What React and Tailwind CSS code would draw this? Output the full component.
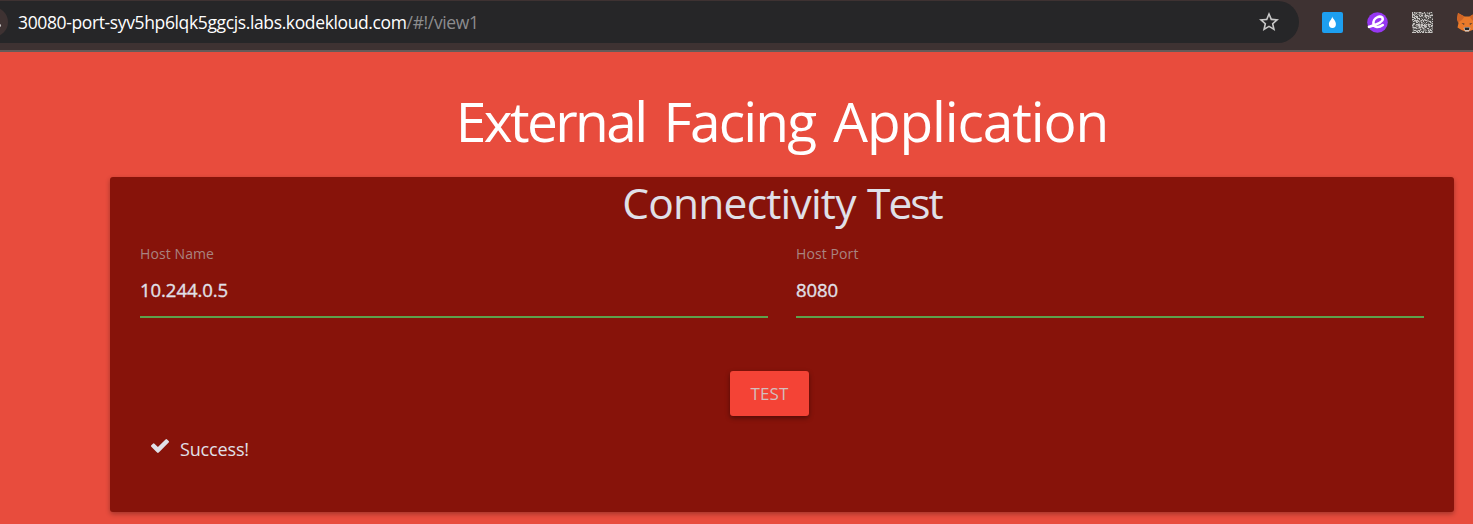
import { MdStarBorder } from "react-icons/md";

function CheckIcon() {
  return (
    <svg className="mt-[2px] h-[14px] w-[18px] shrink-0" viewBox="121 334 1550 1188" fill="#e0e0e8">
      <path d="M1671 566q0 40-28 68l-724 724-136 136q-28 28-68 28t-68-28l-136-136-362-362q-28-28-28-68t28-68l136-136q28-28 68-28t68 28l294 295 656-657q28-28 68-28t68 28l136 136q28 28 28 68z" />
    </svg>
  );
}

function DropIcon() {
  return (
    <svg className="size-[21px] shrink-0" viewBox="0 0 21 21">
      <rect width="21" height="21" rx="2" fill="#1d9ff0" />
      <path d="M10.200 4.600c.5 2.500 3.700 4 3.700 7.400a3.500 4 0 0 1-7 0c0-2.500 2.800-4 3.300-7.400z" fill="#fff" />
    </svg>
  );
}

function OrbitIcon() {
  return (
    <svg className="size-[21px] shrink-0" viewBox="0 0 21 21">
      <circle cx="10.500" cy="10.500" r="10.300" fill="#9637f2" />
      <path d="M2 14.800C7 13.300 15.800 11 15.800 7.300c0-2.600-3-3.200-5.300-2.200-3 1.200-4.500 4.300-4 7 .6 3.500 5.200 4 9.300.9" fill="none" stroke="#fff" strokeWidth="2.600" strokeLinecap="round" />
    </svg>
  );
}

const cells = [];
for (let y = 0; y < 21; y++) {
  for (let x = 0; x < 21; x++) {
    const n = Math.sin(x * 12.9898 + y * 78.233) * 43758.5453;
    cells.push([x, y, n - Math.floor(n)]);
  }
}

function CodeIcon() {
  return (
    <svg className="size-[21px] shrink-0" viewBox="0 0 21 21">
      <rect width="21" height="21" fill="#aaa6a4" />
      {cells.map(([x, y, n]) => (
        <rect key={`${x}-${y}`} x={x} y={y} width="1" height="1" fill={n > 0.66 ? "#4b4846" : n > 0.33 ? "#85817f" : "#c6c3c1"} />
      ))}
    </svg>
  );
}

function FoxIcon() {
  return (
    <svg className="mt-px h-[19px] w-[20px] shrink-0" viewBox="0 0 20 19">
      <path d="M1 0l6.500 3.500h5L19 0l1 6-1.500 4 1 4.500-4 2.500-4 1.500h-3l-4-1.500-4-2.500 1-4.500L0 6z" fill="#e87a2a" />
      <path d="M1 0l6.500 3.500L5 7 1 9.500 0 6zM19 0l-6.500 3.500L15 7l4 2.500L20 6z" fill="#cf6526" />
      <path d="M4.500 10l3 .5-.5 1.500zM15.500 10l-3 .5.500 1.500z" fill="#4a3a30" />
      <path d="M6.500 15l1.500-1h4l1.500 1-1.500 3.500H8z" fill="#cfc5bd" />
      <path d="M7.500 14.500h5l-.5 2.500H8z" fill="#202428" />
    </svg>
  );
}

function Toolbar() {
  return (
    <header className="flex h-[52px] items-start border-b-2 border-[#655b59] bg-[#3e3232]">
      <div className="mt-px flex h-[42px] w-[1299px] shrink-0 items-center overflow-hidden rounded-r-full bg-[#262628]">
        <div className="-ml-[24px] mr-[10px] flex h-[30px] w-[32px] shrink-0 items-center justify-end rounded-full bg-[#3e3232]">
          <span className="mr-[7px] mt-[6px] size-[3px] rounded-full bg-[#c9c5c4]" />
        </div>
        <p className="grow whitespace-nowrap text-[17.500px] leading-[24px] tracking-[-0.370px] text-white">
          <span>30080-port-syv5hp6lqk5ggcjs.labs.kodekloud.com</span>
          <span className="text-[#8c8c8e]">/#!/view1</span>
        </p>
        <MdStarBorder className="mr-[18px] size-[24px] text-[#c7c7c7]" />
      </div>
      <div className="ml-[23px] mt-[12px] flex gap-[24px]">
        <DropIcon />
        <OrbitIcon />
        <CodeIcon />
        <FoxIcon />
      </div>
    </header>
  );
}

function Field({ label, value }) {
  return (
    <div className="flex h-[74px] w-[628px] flex-col border-b-2 border-[#5da24b]">
      <label className="text-[14px] leading-[20px] tracking-[0.100px] text-[#a98380]">{label}</label>
      <span className="mt-[14px] text-[18.500px] leading-[24px] tracking-[-0.050px] text-[#e0e0e8] [-webkit-text-stroke:0.350px_#e0e0e8]">{value}</span>
    </div>
  );
}

export default function App() {
  return (
    <div className="h-[524px] w-[1473px] overflow-hidden bg-[#e84c3d] font-['Open_Sans',sans-serif]">
      <Toolbar />
      <main className="ml-[110px] w-[1344px]">
        <h1 className="h-[125px] whitespace-nowrap pt-[29px] text-center text-[55px] leading-[80px] tracking-[-1.400px] text-white [word-spacing:5px]">
          <span className="tracking-[-2.600px]">External</span>{" "}
          <span className="tracking-[-1.800px]">Facing</span>{" "}
          <span className="tracking-[-1.100px]">Application</span>
        </h1>
        <section className="h-[335px] rounded-[3px] bg-[#87130a] px-[30px] shadow-[0_2px_5px_rgba(0,0,0,0.3)]">
          <h2 className="h-[67px] whitespace-nowrap text-center text-[42.500px] leading-[51px] tracking-[-0.800px] text-[#e0e0e8] [word-spacing:1px]">
            <span>Connectivity</span> <span className="tracking-[-2px]">Test</span>
          </h2>
          <div className="flex gap-[28px]">
            <Field label="Host Name" value="10.244.0.5" />
            <Field label="Host Port" value="8080" />
          </div>
          <button className="ml-[590px] mt-[53px] flex h-[45px] w-[79px] items-center justify-center rounded-[3px] bg-[#f44336] pt-px text-[17px] tracking-[0.100px] text-[#d3bebd] shadow-[0_2px_5px_rgba(0,0,0,0.4)]">
            <span>TEST</span>
          </button>
          <div className="ml-[11px] mt-[21px] flex items-start">
            <CheckIcon />
            <span className="ml-[11px] text-[18px] leading-[24px] tracking-[-0.150px] text-[#e0e0e8]">Success!</span>
          </div>
        </section>
      </main>
    </div>
  );
}
